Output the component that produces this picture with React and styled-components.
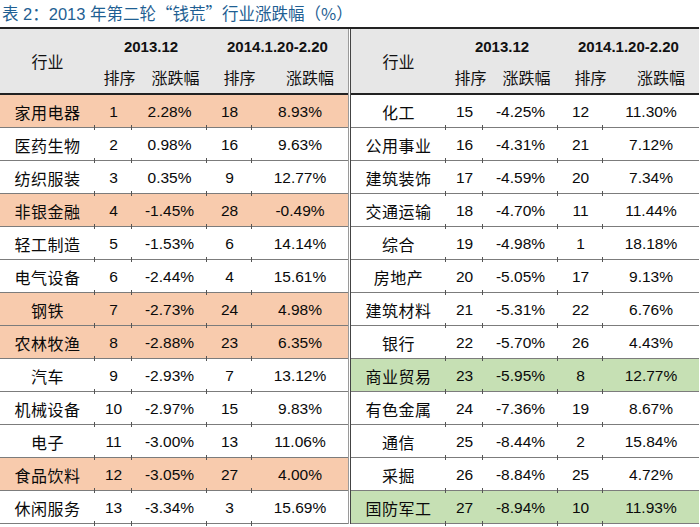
import React from "react";
import styled, { createGlobalStyle } from "styled-components";

const Global = createGlobalStyle`
  html, body { margin: 0; padding: 0; background: #fff; }
  body { font-family: "Liberation Sans", Arial, "Noto Sans CJK SC", sans-serif; color: #111; }
`;

const COLS = "95px 37px 75px 45px 96px";

const Page = styled.div`
  width: 700px;
  height: 527px;
  overflow: hidden;
`;

const Title = styled.div`
  height: 27px;
  padding-left: 2px;
  display: flex;
  align-items: center;
  font-size: 16.5px;
  color: #1f5f93;
  font-family: "Liberation Sans", "Noto Sans CJK SC", sans-serif;
  white-space: nowrap;
  position: relative;
  top: -1px;
`;

const Cjk = styled.span`
  font-family: "Noto Sans CJK SC", sans-serif;
`;

const Tables = styled.div`
  display: flex;
  gap: 1px;
  border-top: 2px solid #222;
  width: 699px;
`;

const Table = styled.div`
  width: 348px;
  border-left: ${(p) => (p.$right ? "1px solid #444" : "none")};
  border-right: ${(p) => (p.$right ? "none" : "1px solid #9a9a9a")};
`;

const Head = styled.div`
  display: grid;
  grid-template-columns: ${COLS};
  grid-template-rows: 32px 32px;
  background: #e7e7e7;
  border-bottom: 2px solid #222;
`;

const HeadName = styled.div`
  grid-row: 1 / 3;
  display: flex;
  align-items: center;
  justify-content: center;
  font-size: 16px;
  font-family: "Liberation Sans", "Noto Sans CJK SC", sans-serif;
`;

const HeadGroup = styled.div`
  grid-column: span 2;
  display: flex;
  align-items: center;
  justify-content: center;
  font-weight: bold;
  font-size: 15px;
  font-family: "Liberation Sans", Arial, sans-serif;
  padding-left: ${(p) => p.$shift || 0}px;
  padding-top: 2px;
`;

const HeadSub = styled.div`
  display: flex;
  align-items: center;
  justify-content: center;
  font-size: 16px;
  white-space: nowrap;
  padding-left: ${(p) => p.$shift || 0}px;
  padding-bottom: 1px;
  font-family: "Liberation Sans", "Noto Sans CJK SC", sans-serif;
`;

const Row = styled.div`
  display: grid;
  grid-template-columns: ${COLS};
  height: 32px;
  border-bottom: 1px solid #7c7c7c;
  background: ${(p) =>
    p.$hl === "o" ? "#f8cbad" : p.$hl === "g" ? "#c6e0b4" : "#fff"};
`;

const Cell = styled.div`
  position: relative;
  display: flex;
  align-items: center;
  justify-content: center;
  font-family: "Liberation Sans", Arial, sans-serif;
  font-size: 15.5px;
  color: #0a0a0a;
  white-space: nowrap;
  padding-top: 1px;
  &:not(:last-child)::after {
    content: "";
    position: absolute;
    right: 0;
    bottom: -3px;
    width: 1px;
    height: 5px;
    background: #555;
  }
`;

const NameCell = styled(Cell)`
  font-size: 16px;
  letter-spacing: 0.5px;
  font-family: "Liberation Sans", "Noto Sans CJK SC", sans-serif;
`;

const left = [
  ["家用电器", 1, "2.28%", 18, "8.93%", "o"],
  ["医药生物", 2, "0.98%", 16, "9.63%"],
  ["纺织服装", 3, "0.35%", 9, "12.77%"],
  ["非银金融", 4, "-1.45%", 28, "-0.49%", "o"],
  ["轻工制造", 5, "-1.53%", 6, "14.14%"],
  ["电气设备", 6, "-2.44%", 4, "15.61%"],
  ["钢铁", 7, "-2.73%", 24, "4.98%", "o"],
  ["农林牧渔", 8, "-2.88%", 23, "6.35%", "o"],
  ["汽车", 9, "-2.93%", 7, "13.12%"],
  ["机械设备", 10, "-2.97%", 15, "9.83%"],
  ["电子", 11, "-3.00%", 13, "11.06%"],
  ["食品饮料", 12, "-3.05%", 27, "4.00%", "o"],
  ["休闲服务", 13, "-3.34%", 3, "15.69%"],
];

const right = [
  ["化工", 15, "-4.25%", 12, "11.30%"],
  ["公用事业", 16, "-4.31%", 21, "7.12%"],
  ["建筑装饰", 17, "-4.59%", 20, "7.34%"],
  ["交通运输", 18, "-4.70%", 11, "11.44%"],
  ["综合", 19, "-4.98%", 1, "18.18%"],
  ["房地产", 20, "-5.05%", 17, "9.13%"],
  ["建筑材料", 21, "-5.31%", 22, "6.76%"],
  ["银行", 22, "-5.70%", 26, "4.43%"],
  ["商业贸易", 23, "-5.95%", 8, "12.77%", "g"],
  ["有色金属", 24, "-7.36%", 19, "8.67%"],
  ["通信", 25, "-8.44%", 2, "15.84%"],
  ["采掘", 26, "-8.84%", 25, "4.72%"],
  ["国防军工", 27, "-8.94%", 10, "11.93%", "g"],
];

function DataTable({ rows, isRight }) {
  return (
    <Table $right={isRight}>
      <Head>
        <HeadName>行业</HeadName>
        <HeadGroup $shift={-4}>2013.12</HeadGroup>
        <HeadGroup $shift={-4}>2014.1.20-2.20</HeadGroup>
        <HeadSub $shift={12}>排序</HeadSub>
        <HeadSub $shift={12}>涨跌幅</HeadSub>
        <HeadSub $shift={20}>排序</HeadSub>
        <HeadSub $shift={20}>涨跌幅</HeadSub>
      </Head>
      {rows.map((r) => (
        <Row key={r[0]} $hl={r[5]}>
          <NameCell>{r[0]}</NameCell>
          <Cell>{r[1]}</Cell>
          <Cell>{r[2]}</Cell>
          <Cell>{r[3]}</Cell>
          <Cell>{r[4]}</Cell>
        </Row>
      ))}
    </Table>
  );
}

export default function App() {
  return (
    <Page>
      <Global />
      <Title>
        表 2<Cjk>：</Cjk>2013 年第二轮<Cjk>“钱荒”</Cjk>行业涨跌幅<Cjk>（%）</Cjk>
      </Title>
      <Tables>
        <DataTable rows={left} />
        <DataTable rows={right} isRight />
      </Tables>
    </Page>
  );
}
